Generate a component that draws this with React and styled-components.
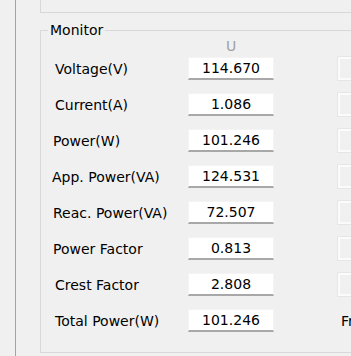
import React from "react";
import styled, { createGlobalStyle } from "styled-components";

const GlobalStyle = createGlobalStyle`
  html, body {
    margin: 0;
    padding: 0;
    background: #f0f0f0;
    overflow: hidden;
  }
  body {
    font-family: "DejaVu Sans", Verdana, sans-serif;
    font-size: 14px;
    color: #000;
  }
`;

const Page = styled.div`
  display: flex;
  width: 351px;
  height: 356px;
  padding-left: 15px;
  box-sizing: border-box;
  overflow: hidden;
`;

const Rail = styled.div`
  width: 1px;
  flex: none;
  background: #a3a3a3;
`;

const Content = styled.div`
  flex: none;
  width: 360px;
  margin-left: 24px;
  display: flex;
  flex-direction: column;
`;

const TopBox = styled.div`
  height: 12px;
  border-left: 1px solid #d8d8d8;
  border-bottom: 1px solid #d8d8d8;
`;

const GroupBox = styled.fieldset`
  margin: 9px 0 0 0;
  padding: 0;
  height: 331px;
  box-sizing: border-box;
  border: 1px solid #d8d8d8;
  min-width: 0;
`;

const Legend = styled.legend`
  margin-left: 7px;
  padding: 0 2px;
  line-height: 16px;
  font-size: 14px;
`;

const Inner = styled.div`
  padding-left: 11px;
`;

const Grid = styled.div`
  display: grid;
  grid-template-columns: 136px 86px 1fr;
  grid-auto-rows: 23px;
  row-gap: 13px;
  align-items: center;
`;

const HeadRow = styled.div`
  display: grid;
  grid-template-columns: 136px 86px;
`;

const HeadCell = styled.div`
  grid-column: 2;
  height: 19px;
  line-height: 16px;
  text-align: center;
  color: #a0a0a0;
`;

const Label = styled.div`
  padding-left: ${(p) => p.$shift}px;
  white-space: nowrap;
`;

const Value = styled.div`
  height: 23px;
  box-sizing: border-box;
  background: #fff;
  border: 1px solid #f4f4f4;
  border-bottom: 2px solid #a8a8a8;
  text-align: center;
  line-height: 20px;
`;

const Spare = styled.div`
  margin-left: 64px;
  height: 23px;
  box-sizing: border-box;
  border: 2px solid #fbfbfb;
  box-shadow: 0 0 0 1px #e6e6e6;
`;

const SpareText = styled.div`
  margin-left: 67px;
  white-space: nowrap;
`;

const rows = [
  { label: "Voltage(V)", value: "114.670", shift: 3 },
  { label: "Current(A)", value: "1.086", shift: 3 },
  { label: "Power(W)", value: "101.246", shift: 1 },
  { label: "App. Power(VA)", value: "124.531", shift: 0 },
  { label: "Reac. Power(VA)", value: "72.507", shift: 1 },
  { label: "Power Factor", value: "0.813", shift: 1 },
  { label: "Crest Factor", value: "2.808", shift: 3 },
  { label: "Total Power(W)", value: "101.246", shift: 3, extra: "Freq(Hz)" },
];

export default function App() {
  return (
    <>
      <GlobalStyle />
      <Page>
        <Rail />
        <Content>
          <TopBox />
          <GroupBox>
            <Legend>Monitor</Legend>
            <Inner>
              <HeadRow>
                <HeadCell>U</HeadCell>
              </HeadRow>
              <Grid>
                {rows.map((r) => (
                  <React.Fragment key={r.label}>
                    <Label $shift={r.shift}>{r.label}</Label>
                    <Value>{r.value}</Value>
                    {r.extra ? <SpareText>{r.extra}</SpareText> : <Spare />}
                  </React.Fragment>
                ))}
              </Grid>
            </Inner>
          </GroupBox>
        </Content>
      </Page>
    </>
  );
}
